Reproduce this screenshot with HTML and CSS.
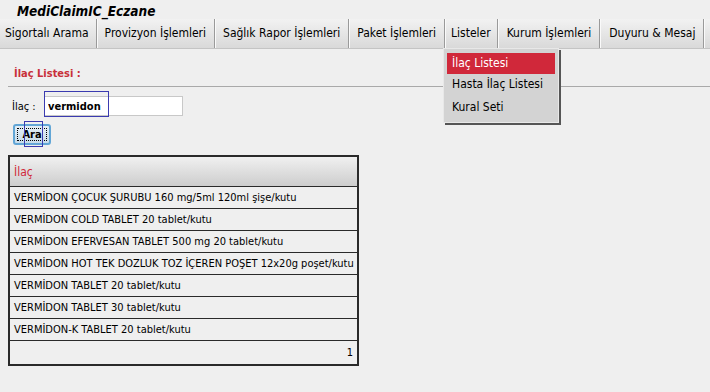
FILE: index.html
```html
<!DOCTYPE html>
<html lang="tr">
<head>
    <meta charset="UTF-8">
    <title>MediClaimIC_Eczane</title>
    <link rel="stylesheet" href="styles.css">
</head>
<body>
    <div class="title">MediClaimIC_Eczane</div>

    <div class="menubar">
        <div class="menu-item first">Sigortalı Arama</div>
        <div class="menu-item">Provizyon İşlemleri</div>
        <div class="menu-item">Sağlık Rapor İşlemleri</div>
        <div class="menu-item">Paket İşlemleri</div>
        <div class="menu-item open">Listeler
            <ul class="dropdown">
                <li class="active">İlaç Listesi</li>
                <li>Hasta İlaç Listesi</li>
                <li>Kural Seti</li>
            </ul>
        </div>
        <div class="menu-item wide">Kurum İşlemleri</div>
        <div class="menu-item wide">Duyuru &amp; Mesaj</div>
    </div>

    <div class="content">
        <h2 class="page-title">İlaç Listesi :</h2>
        <hr/>

        <div class="search-row">
            <label for="ilac">İlaç :</label>
            <div class="input-wrap">
                <input type="text" id="ilac" value="vermidon"/>
                <span class="focus-box"></span>
            </div>
        </div>
        <div class="btn-wrap">
            <button class="btn">Ara</button>
            <span class="focus-box small"></span>
        </div>

        <table class="grid">
            <thead>
                <tr><th>İlaç</th></tr>
            </thead>
            <tbody>
                <tr><td>VERMİDON ÇOCUK ŞURUBU 160 mg/5ml 120ml şişe/kutu</td></tr>
                <tr><td>VERMİDON COLD TABLET 20 tablet/kutu</td></tr>
                <tr><td>VERMİDON EFERVESAN TABLET 500 mg 20 tablet/kutu</td></tr>
                <tr><td>VERMİDON HOT TEK DOZLUK TOZ İÇEREN POŞET 12x20g poşet/kutu</td></tr>
                <tr><td>VERMİDON TABLET 20 tablet/kutu</td></tr>
                <tr><td>VERMİDON TABLET 30 tablet/kutu</td></tr>
                <tr><td>VERMİDON-K TABLET 20 tablet/kutu</td></tr>
            </tbody>
            <tfoot>
                <tr><td class="pager">1</td></tr>
            </tfoot>
        </table>
    </div>
</body>
</html>
```

FILE: styles.css
```css
body{
    margin: 0;
    background: #efefef;
    font-family: "DejaVu Sans Condensed", "DejaVu Sans", sans-serif;
    font-size: 11px;
    color: #000;
}
.title{
    padding: 3px 0 0 17px;
    height: 16px;
    font-size: 13.5px;
    font-weight: bold;
    font-style: italic;
}
.menubar{
    display: flex;
    height: 29px;
    background: linear-gradient(#f2f2f2, #d9d9d9);
    border-bottom: 1px solid #c4c4c4;
}
.menu-item{
    position: relative;
    padding: 0 8px;
    line-height: 29px;
    font-size: 12px;
    white-space: nowrap;
    border-right: 1px solid #9a9a9a;
    box-shadow: 1px 0 0 #fafafa;
}
.menu-item.first{
    padding-left: 5px;
    padding-right: 7px;
}
.menu-item.open{
    padding: 0 6px;
}
.menu-item.wide{
    padding: 0 8px 0 9px;
}
.dropdown{
    position: absolute;
    top: 29px;
    left: -2px;
    width: 108px;
    margin: 0;
    padding: 4px 3px 2px;
    list-style: none;
    background: #d3d3d3;
    border: 1px solid #e8e8e8;
    box-shadow: 2px 2px 0 #555;
    z-index: 2;
}
.dropdown li{
    height: 23px;
    line-height: 21px;
    padding-left: 5px;
    font-size: 12px;
}
.dropdown li.active{
    background: #d0283a;
    color: #fff;
    height: 21px;
}
.content{
    padding: 0 0 0 8px;
}
.page-title{
    margin: 0;
    padding: 18px 0 0 6px;
    height: 19px;
    color: #c8303a;
    font-size: 11px;
}
hr{
    margin: 0;
    border: none;
    border-top: 1px solid #a9a9a9;
}
.search-row{
    display: flex;
    align-items: center;
    margin-top: 9px;
    padding-left: 4px;
}
.search-row label{
    width: 32px;
}
.input-wrap, .btn-wrap{
    position: relative;
}
.search-row input{
    width: 131px;
    height: 14px;
    padding: 2px 3px;
    border: 1px solid #c8c8c8;
    background: #fff;
    font-family: inherit;
    font-size: 11px;
    font-weight: bold;
    outline: none;
}
.focus-box{
    position: absolute;
    left: 0;
    top: -5px;
    width: 63px;
    height: 24px;
    border: 1px solid #3b3bb0;
}
.btn-wrap{
    display: inline-block;
    margin: 8px 0 0 5px;
}
.btn{
    height: 21px;
    width: 38px;
    padding: 0;
    background: linear-gradient(#e4eef6, #c8dcea);
    border: 2px solid #62a6d6;
    border-radius: 3px;
    font-family: inherit;
    font-size: 11px;
    font-weight: bold;
    outline: 1px dotted #000;
    outline-offset: -5px;
}
.focus-box.small{
    left: 11px;
    top: -3px;
    width: 17px;
    height: 24px;
}
.grid{
    margin-top: 10px;
    width: 351px;
    table-layout: fixed;
    border-collapse: collapse;
    border: 2px solid #2a2a2a;
}
.grid th{
    height: 29px;
    padding: 0 4px;
    text-align: left;
    color: #d0283a;
    font-size: 12px;
    font-weight: normal;
    background: linear-gradient(#f0f0f0, #cdcdcd);
}
.grid td{
    height: 21px;
    padding: 0 0 0 4px;
    border-top: 1px solid #2a2a2a;
    font-size: 11px;
    white-space: nowrap;
    overflow: hidden;
}
.grid td.pager{
    height: 23px;
    padding-right: 4px;
    text-align: right;
}
```
